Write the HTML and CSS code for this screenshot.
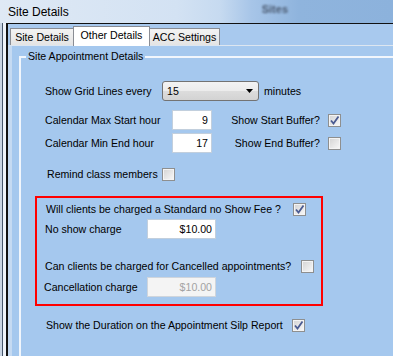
FILE: index.html
```html
<!DOCTYPE html>
<html lang="en">
<head>
  <meta charset="UTF-8">
  <title>Site Details</title>
  <meta name="viewport" content="width=device-width, initial-scale=1.0">
  <link rel="stylesheet" href="styles.css">
</head>
<body>
  <div class="caption">
    <span class="caption-title">Site Details</span>
    <span class="caption-ghost">Sites</span>
  </div>

  <div class="frame">
    <div class="frame-edge"></div>
    <div class="form">
      <div class="tabs">
        <div class="tab tab-site">Site Details</div>
        <div class="tab tab-other active">Other Details</div>
        <div class="tab tab-acc">ACC Settings</div>
      </div>

      <div class="page">
        <fieldset class="group">
          <legend>Site Appointment Details</legend>

          <div class="row row-grid">
            <span class="label w-grid">Show Grid Lines every</span>
            <div class="combo">
              <span>15</span>
              <svg width="7" height="4" viewBox="0 0 7 4"><polygon points="0,0 7,0 3.5,4" fill="#000"/></svg>
            </div>
            <span class="unit">minutes</span>
          </div>

          <div class="row row-start">
            <span class="label w-hour">Calendar Max Start hour</span>
            <input class="num hour" type="text" value="9">
            <span class="label buffer">Show Start Buffer?</span>
            <span class="cb"><svg width="11" height="11" viewBox="0 0 11 11"><path d="M2 5.5 L4.5 8.5 L9.5 1.5" fill="none" stroke="#4a5b92" stroke-width="1.8"/></svg></span>
          </div>

          <div class="row row-end">
            <span class="label w-hour">Calendar Min End hour</span>
            <input class="num hour" type="text" value="17">
            <span class="label buffer">Show End Buffer?</span>
            <span class="cb"></span>
          </div>

          <div class="row row-remind">
            <span class="label w-remind">Remind class members</span>
            <span class="cb"></span>
          </div>

          <div class="charges">
            <div class="row row-fee">
              <span class="label w-fee">Will clients be charged a Standard no Show Fee ?</span>
              <span class="cb"><svg width="11" height="11" viewBox="0 0 11 11"><path d="M2 5.5 L4.5 8.5 L9.5 1.5" fill="none" stroke="#4a5b92" stroke-width="1.8"/></svg></span>
            </div>
            <div class="row row-noshow">
              <span class="label w-charge">No show charge</span>
              <input class="num money" type="text" value="$10.00">
            </div>
            <div class="row row-cancel">
              <span class="label w-cancel">Can clients be charged for Cancelled appointments?</span>
              <span class="cb"></span>
            </div>
            <div class="row row-cancelfee">
              <span class="label w-charge shift">Cancellation charge</span>
              <input class="num money" type="text" value="$10.00" disabled>
            </div>
          </div>

          <div class="row row-duration">
            <span class="label w-duration">Show the Duration on the Appointment Silp Report</span>
            <span class="cb"><svg width="11" height="11" viewBox="0 0 11 11"><path d="M2 5.5 L4.5 8.5 L9.5 1.5" fill="none" stroke="#4a5b92" stroke-width="1.8"/></svg></span>
          </div>
        </fieldset>
      </div>
    </div>
  </div>
</body>
</html>
```

FILE: styles.css
```css
/* Window chrome */
body {
  margin: 0;
  width: 393px;
  height: 356px;
  overflow: hidden;
  font-family: 'Liberation Sans', Arial, sans-serif;
  font-size: 10.6px;
  color: #000;
  background: #a5c8ee;
}

.caption {
  height: 23px;
  display: flex;
  align-items: center;
  padding-left: 8px;
  box-sizing: border-box;
  background: linear-gradient(to right, #dfe9f5 0%, #d3e2f3 45%, #c6daf0 56%, #a7c5e8 64%, #8fb4dd 76%, #8cb2dc 100%);
}

.caption-title {
  font-size: 12px;
  padding-top: 1px;
}

.caption-ghost {
  margin-left: 193px;
  margin-top: -6px;
  font-size: 11px;
  font-weight: bold;
  color: #4b5a70;
  filter: blur(1.3px);
}

.frame {
  display: flex;
  height: 333px;
}

.frame-edge {
  flex-shrink: 0;
  width: 6px;
  background: linear-gradient(to right, #c9d5e4 0 2px, #46566c 2px 3px, #eef3f9 3px);
}

.form {
  flex: 1;
  min-width: 0;
  display: flex;
  flex-direction: column;
  border-top: 1px solid #111;
  border-left: 2px solid #111;
}

/* Tabs */
.tabs {
  display: flex;
  align-items: flex-end;
  height: 21px;
  padding-left: 2px;
  background: #a8c9ee;
}

.tab {
  position: relative;
  box-sizing: border-box;
  height: 17px;
  line-height: 16px;
  text-align: center;
  border: 1px solid #8a8d94;
  border-bottom: none;
  background: linear-gradient(#f3f3f3, #e4e4e4);
}

.tab-site { width: 64px; }
.tab-other { width: 77px; margin-left: -1px; }
.tab-acc { width: 71px; margin-left: -1px; }

.tab.active {
  z-index: 1;
  height: 20px;
  margin-bottom: -1px;
  line-height: 17px;
  background: #fff;
}

/* Tab page */
.page {
  flex: 1;
  display: flex;
  flex-direction: column;
  border-top: 1px solid #dde6f0;
  border-left: 4px solid #c5daf2;
  background: #a5c8ee;
  padding-top: 4px;
}

.group {
  flex: 1;
  margin: 0 0 0 7px;
  padding: 0;
  min-width: 0;
  border: 2px solid #f1f6fc;
  border-right: none;
  border-bottom: none;
}

.group legend {
  margin-left: 5px;
  padding: 0 2px;
  line-height: 13px;
}

.row {
  display: flex;
  align-items: center;
  height: 20px;
  padding-left: 24px;
  white-space: nowrap;
}

.label { display: inline-block; }

.w-grid { width: 117px; }
.w-hour { width: 127px; }
.w-remind { width: 115px; margin-left: 2px; }
.w-fee { width: 247px; margin-left: 1px; }
.w-charge { width: 102px; }
.w-cancel { width: 256px; }
.w-duration { width: 246px; margin-left: 1px; }
.shift { margin-left: -1px; width: 103px; }

.buffer {
  width: 108px;
  text-align: right;
  margin-right: 8px;
}

.row-grid { margin-top: 18px; }
.row-start { margin-top: 9px; }
.row-end { margin-top: 3px; }
.row-remind { margin-top: 11px; }

/* Combo box */
.combo {
  box-sizing: border-box;
  width: 97px;
  height: 20px;
  display: flex;
  align-items: center;
  justify-content: space-between;
  padding: 0 5px 0 4px;
  border: 1px solid #737373;
  border-radius: 3px;
  background: linear-gradient(#f3f3f3 0%, #ececec 48%, #dcdcdc 52%, #d3d3d3 100%);
}

.unit { margin-left: 5px; }

/* Text boxes */
.num {
  box-sizing: border-box;
  height: 20px;
  margin: 0;
  padding: 0 3px 0 2px;
  border: 1px solid #c2cfdd;
  background: #fff;
  font-family: inherit;
  font-size: 10.6px;
  color: #000;
  text-align: right;
}

.hour { width: 40px; }
.money { width: 69px; }

.num:disabled {
  background: #f4f4f4;
  border-color: #cfd5dc;
  color: #a3a3a3;
}

/* Check boxes */
.cb {
  box-sizing: border-box;
  width: 13px;
  height: 13px;
  display: inline-flex;
  align-items: center;
  justify-content: center;
  border: 1px solid #8e8f8f;
  background: linear-gradient(135deg, #d3d3d3, #f9f9f9);
  box-shadow: inset 0 0 0 1px #f4f4f4;
}

/* Red highlight box */
.charges {
  box-sizing: border-box;
  width: 288px;
  margin: 12px 0 0 14px;
  padding: 1px 0 7px 0;
  border: 2px solid #f00;
}

.charges .row { padding-left: 8px; }

.row-cancel { margin-top: 17px; }
.row-cancelfee { margin-top: 1px; }

.row-duration { margin-top: 9px; }
```
